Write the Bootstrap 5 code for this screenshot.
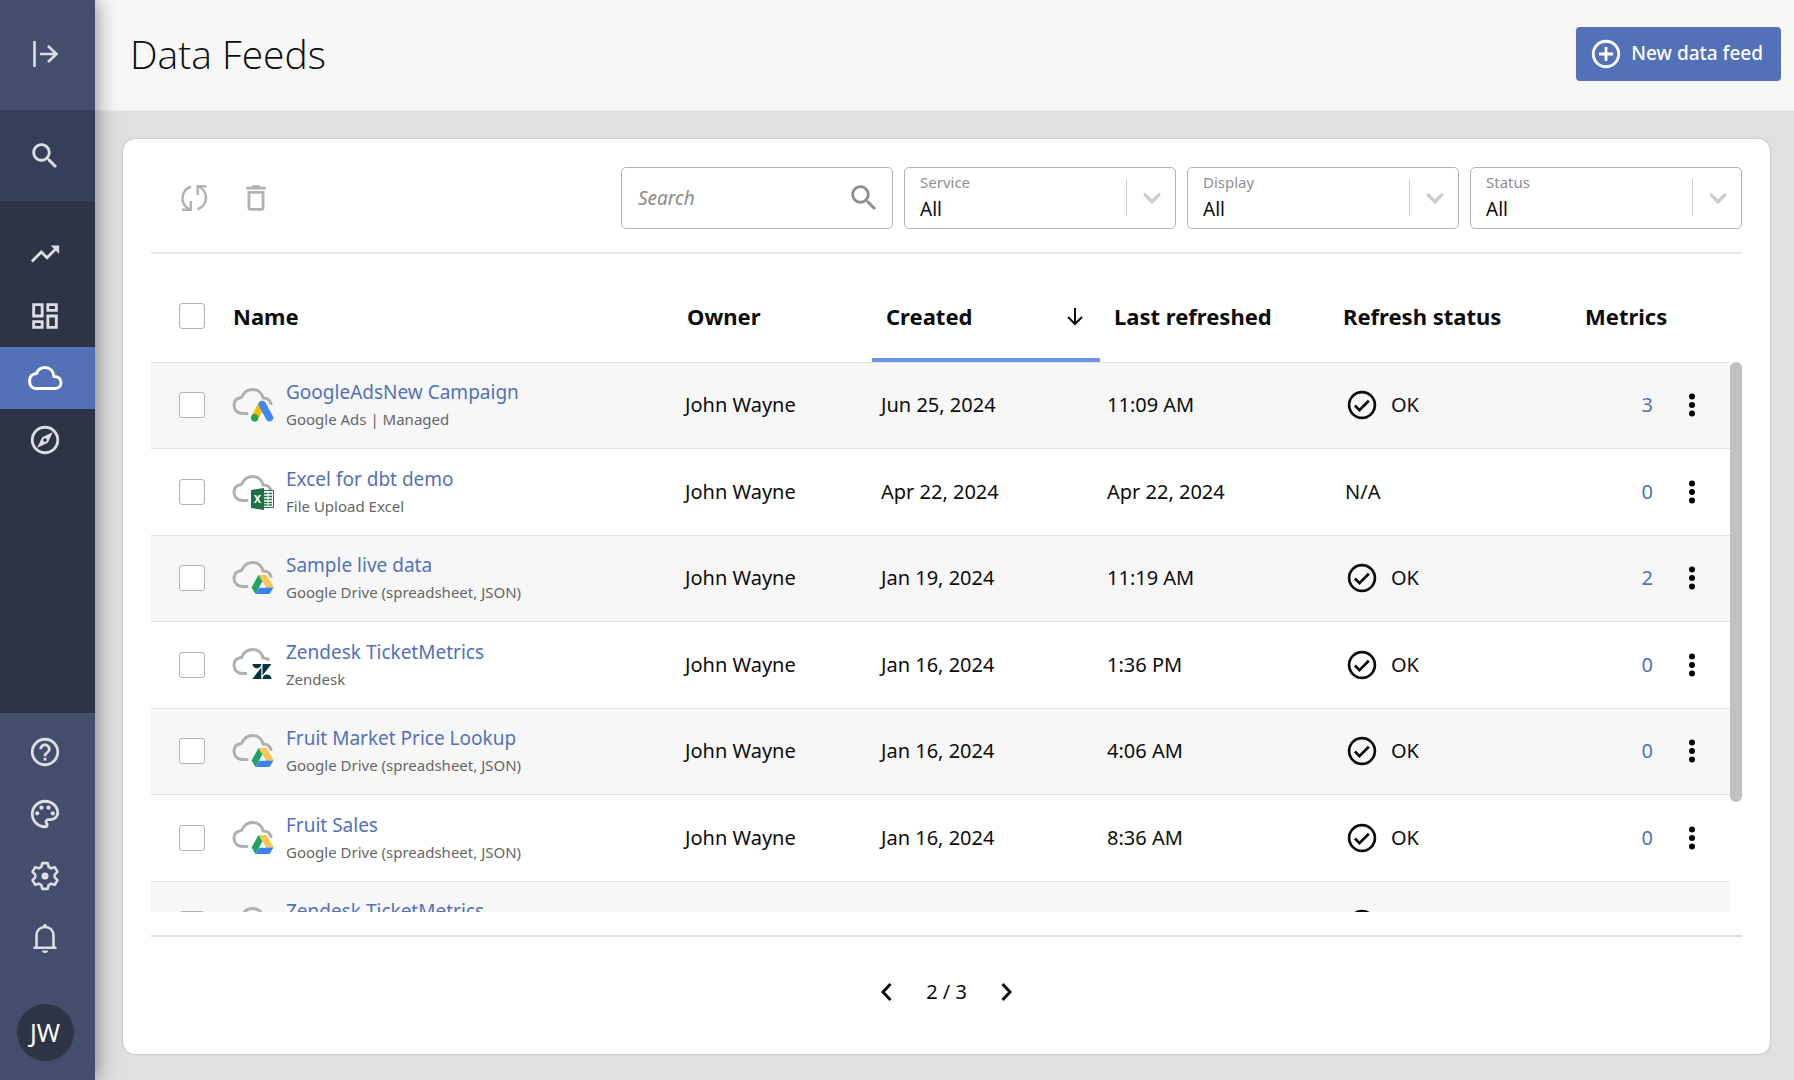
<!DOCTYPE html>
<html lang="en">
<head>
<meta charset="utf-8">
<meta name="viewport" content="width=device-width, initial-scale=1">
<title>Data Feeds</title>
<link href="https://cdn.jsdelivr.net/npm/bootstrap@5.3.0/dist/css/bootstrap.min.css" rel="stylesheet">
<style>
:root{--ink:#0c0c0c;--brand:#5271b9;--line:#e2e2e2;--stroke:#b3b3b3}
body{font-family:"Noto Sans","Open Sans",sans-serif;font-size:20px;line-height:28px;color:var(--ink);background:#e0e0e0}
a{color:var(--brand);text-decoration:none}
svg{display:block;flex:none}
.ic{width:34px;height:34px;fill:currentColor}
.ln{fill:none;stroke:currentColor;stroke-width:2}
.side{width:95px;background:#424e6b;box-shadow:0 0 20px rgba(0,0,0,.5);z-index:2;color:#dcdee3}
.side a,.side button{display:flex;align-items:center;justify-content:center;width:100%;height:62px;padding:0 5px 0 0;border:0;background:none;color:inherit}
.side .side-top{height:110px;padding-bottom:2px}
.side .side-find{height:91px;background:#363f58}
.side-main{background:#2c3446;padding-top:22px}
.side a.on{background:var(--brand);color:#fff}
.side-foot{padding:8px 0 19px}
.side .who{height:57px;margin-top:35px}
.avatar{width:57px;height:57px;border-radius:50%;background:#2c3446;color:#fff;font-size:25px;line-height:57px;text-align:center}
.head{height:111px;padding:0 13px 3px 35px;background:#f7f7f7;border-bottom:1px solid #ebebeb}
.head h1{font-family:"Open Sans","Noto Sans",sans-serif;font-size:39px;font-weight:300;line-height:54px}
.btn-new{height:54px;padding:0 18px 0 13px;gap:8px;border-radius:4px;background:var(--brand);color:#fff;font-size:19px;font-weight:500}
.btn-new:hover{background:#4763a6;color:#fff}
.panel{min-height:0;margin:28px 24px 26px 28px;padding:0 28px;border-radius:12px;background:#fff;box-shadow:0 0 2px rgba(0,0,0,.3)}
.tools{height:115px;padding:5px 0 0 26px;border-bottom:2px solid #e6e6e6}
.tool{display:block;padding:0;border:0;background:none;color:var(--stroke)}
.tool-pair{gap:28px}
.filters{gap:11px}
.field{width:272px;height:62px}
.field .form-control,.field .form-select{height:100%;border:1px solid var(--stroke);border-radius:5px;font-size:19px;color:var(--ink);background-color:#fff}
.field .form-control{padding:0 60px 0 16px;font-style:italic}
.field .form-control::placeholder{color:#8a8a8a;opacity:1}
.field .form-select{padding:22px 60px 0 15px;line-height:28px;background-image:none}
.field-name{position:absolute;left:16px;top:5px;font-size:15px;line-height:20px;color:#8f8f8f;pointer-events:none}
.field-mark{position:absolute;right:0;top:12px;width:50px;height:37px;border-left:1px solid #ccc;color:#ccc;pointer-events:none}
.field-find{position:absolute;right:12px;top:14px;color:#8f8f8f;pointer-events:none}
.grid-area{min-height:0}
.grid-clip{overflow:hidden;min-width:0}
.feeds{table-layout:fixed;margin:0;color:var(--ink);--bs-table-bg:transparent}
.feeds>:not(caption)>*>*{padding:0;border:0;vertical-align:middle;white-space:nowrap;background:none;color:inherit;box-shadow:none}
.feeds thead th{height:108px;padding:17px 14px 0 14px;font-size:22px;font-weight:700}
.feeds thead th.sorted{box-shadow:inset 0 -4px #7094e8}
.feeds tbody tr{height:86px;background:#fff;border-top:1px solid var(--line)}
.feeds tbody tr:nth-child(odd){background:#f7f7f7}
.feeds tbody tr:nth-child(even){height:87px}
.feeds tbody td:nth-child(1),.feeds thead th:nth-child(1){padding-left:28px}
.feeds tbody td:nth-child(2){padding-left:13px}
.feeds tbody td:nth-child(3){padding-left:12px}
.feeds tbody td:nth-child(4){padding-left:9px}
.feeds tbody td:nth-child(5){padding-left:7px}
.feeds tbody td:nth-child(6){padding-left:16px}
.feeds tbody td:nth-child(7){padding-right:16px;text-align:right}
.feeds tbody td:nth-child(8){padding-left:6px}
.c-check{width:68px}.c-owner{width:199px}.c-date{width:228px}.c-last{width:229px}.c-state{width:242px}.c-num{width:98px}.c-more{width:61px}
.pick.form-check-input{display:block;width:26px;height:26px;margin:0;border:1px solid var(--stroke);border-radius:3px;background-color:#fff}
.src{width:42px;height:36px;margin-right:12px}
.feed{display:block;font-size:19px;line-height:28px}
.kind{display:block;font-size:15px;line-height:26px;color:#666}
.rail{width:12px;padding-top:108px}
.thumb{height:80%;border-radius:6px;background:#c1c1c1}
.foot{height:119px;margin-top:23px;padding-bottom:7px;border-top:2px solid var(--line);gap:27px}
.foot button{padding:0;border:0;background:none;color:var(--ink)}
</style>
</head>
<body>
<svg width="0" height="0" class="position-absolute" aria-hidden="true">
  <defs>
    <symbol id="search" viewBox="0 0 24 24"><path d="M15.500 14h-.79l-.28-.27A6.500 6.500 0 1 0 13.730 14.430l.27.28v.79l5 4.990L20.490 19zM9.500 14a4.500 4.500 0 1 1 0-9 4.500 4.500 0 0 1 0 9z"/></symbol>
    <symbol id="cloud" viewBox="0 0 42 36"><path d="M15 26.500H11C5 26.500 2 22.500 2 18C2 13.500 5 11 9.500 10.500C11.500 6 15.500 2.500 20.500 2.500C26 2.500 30 6 31 11C35.500 11 38 13 39 16.500" fill="none" stroke="#b0b0b0" stroke-width="3" stroke-linecap="round" stroke-linejoin="round"/></symbol>
    <symbol id="drive" viewBox="0 0 42 36"><use href="#cloud"/><path d="M26.500 15h8L42 27.500h-8z" fill="#fbc651"/><path d="M26.500 15l4 6.500L23.500 34l-4-6.500z" fill="#1fa463"/><path d="M27.300 27.500H41.500L37.500 34H23.500z" fill="#3f80f0"/><path d="M30.500 21.500l3.300 6h-6.500z" fill="#fff"/></symbol>
    <symbol id="zendesk" viewBox="0 0 42 36"><path d="M15 26.500H11C5 26.500 2 22.500 2 18C2 13.500 5 11 9.500 10.500C11.500 6 15.500 2.500 20.500 2.500C26 2.500 30 6 31 11C34 11 36 12 37.500 13" fill="none" stroke="#b0b0b0" stroke-width="3"/><path d="M20.500 17h8.800a4.400 4.400 0 0 1-8.800 0zM29.300 20.500V32h-9zM30.500 17h9l-9 11.500zM30.500 32a4.500 4.500 0 0 1 9 0z" fill="#03363d"/></symbol>
    <symbol id="done" viewBox="0 0 24 24"><circle cx="12" cy="12" r="9.100" fill="none" stroke="currentColor" stroke-width="1.900"/><path d="M7 12.400l3.200 3.200L16.800 9" fill="none" stroke="currentColor" stroke-width="1.900"/></symbol>
    <symbol id="more" viewBox="0 0 34 34"><circle cx="17" cy="8.500" r="3"/><circle cx="17" cy="17" r="3"/><circle cx="17" cy="25.500" r="3"/></symbol>
    <symbol id="down" viewBox="0 0 16 16"><path d="M2.500 5.500L8 11l5.500-5.500" fill="none" stroke="currentColor" stroke-width="2.800" stroke-linecap="round"/></symbol>
  </defs>
</svg>
<div class="d-flex vh-100">
  <nav class="side d-flex flex-column flex-shrink-0" aria-label="Main">
    <button type="button" class="side-top" aria-label="Expand menu"><svg class="ic ln" viewBox="0 0 34 34"><path d="M6.500 4v26M12 17h16M20 9l8.500 8L20 25" stroke-width="2.600"/></svg></button>
    <button type="button" class="side-find" aria-label="Search"><svg class="ic"><use href="#search"/></svg></button>
    <div class="side-main flex-grow-1">
      <a href="#" aria-label="Metrics"><svg class="ic" viewBox="0 0 24 24"><path d="M16 6l2.290 2.290-4.880 4.880-4-4L2 16.590 3.410 18l6-6 4 4 6.300-6.290L22 12V6z"/></svg></a>
      <a href="#" aria-label="Dashboards"><svg class="ic" viewBox="0 0 24 24"><path d="M19 5v2h-4V5h4M9 5v6H5V5h4m10 8v6h-4v-6h4M9 17v2H5v-2h4M21 3h-8v6h8V3zM11 3H3v10h8V3zm10 8h-8v10h8V11zm-10 4H3v6h8v-6z"/></svg></a>
      <a href="#" class="on" aria-label="Data feeds" aria-current="page"><svg width="36" height="34" viewBox="0 0 36 34"><path d="M9.500 27.500H27.500C31.500 27.500 34 25 34 21.500C34 18 31.500 15.500 27 15.500C26.500 10 23 6.500 18 6.500C14 6.500 11 8.500 9.500 12.500C5 13 2.500 16 2.500 20C2.500 24.500 5.500 27.500 9.500 27.500z" fill="none" stroke="currentColor" stroke-width="3" stroke-linejoin="round"/></svg></a>
      <a href="#" aria-label="Explore"><svg class="ic" viewBox="0 0 24 24"><path fill-rule="evenodd" d="M12 2a10 10 0 1 0 0 20 10 10 0 0 0 0-20zm0 18a8 8 0 1 1 0-16 8 8 0 0 1 0 16zM6.500 17.500l7.510-3.490L17.500 6.500 9.990 9.990 6.500 17.500zM12 10.700a1.300 1.300 0 1 1 0 2.600 1.300 1.300 0 0 1 0-2.600z"/></svg></a>
    </div>
    <div class="side-foot">
      <a href="#" aria-label="Help"><svg class="ic" viewBox="0 0 24 24"><path d="M11 18h2v-2h-2v2zm1-16a10 10 0 1 0 0 20 10 10 0 0 0 0-20zm0 18a8 8 0 1 1 0-16 8 8 0 0 1 0 16zm0-14c-2.210 0-4 1.790-4 4h2c0-1.100.9-2 2-2s2 .9 2 2c0 2-3 1.750-3 5h2c0-2.250 3-2.500 3-5 0-2.210-1.790-4-4-4z"/></svg></a>
      <a href="#" aria-label="Themes"><svg class="ic" viewBox="0 0 24 24"><path d="M12 22C6.490 22 2 17.510 2 12S6.490 2 12 2s10 4.040 10 9c0 3.310-2.690 6-6 6h-1.770c-.28 0-.5.22-.5.5 0 .12.050.230.130.330.410.470.640 1.060.640 1.670A2.500 2.500 0 0 1 12 22zm0-18c-4.410 0-8 3.590-8 8s3.590 8 8 8c.28 0 .5-.22.5-.5 0-.16-.080-.280-.140-.350-.410-.460-.630-1.050-.630-1.650 0-1.380 1.120-2.500 2.500-2.500H16c2.210 0 4-1.790 4-4 0-3.860-3.590-7-8-7z"/><circle cx="6.500" cy="11.500" r="1.500"/><circle cx="9.500" cy="7.500" r="1.500"/><circle cx="14.500" cy="7.500" r="1.500"/><circle cx="17.500" cy="11.500" r="1.500"/></svg></a>
      <a href="#" aria-label="Settings"><svg class="ic" viewBox="-12 -12 24 24"><path d="M-2.600-6.400L-1.900-9.100H1.900L2.600-6.400L4.240-5.450L6.930-6.200L8.830-2.900L6.840-.95V.95L8.830 2.900L6.930 6.200L4.240 5.450L2.600 6.400L1.900 9.100H-1.900L-2.600 6.400L-4.240 5.450L-6.930 6.200L-8.830 2.900L-6.840 .95V-.95L-8.830-2.900L-6.930-6.200L-4.240-5.450z" fill="none" stroke="currentColor" stroke-width="1.800" stroke-linejoin="round"/><circle r="2.500"/></svg></a>
      <a href="#" aria-label="Notifications"><svg class="ic" viewBox="0 0 34 34"><path d="M8.500 27V15C8.500 9.500 12 6 17 6S25.500 9.500 25.500 15V27" fill="none" stroke="currentColor" stroke-width="2.600"/><path d="M5.500 25.500h23v2.400h-23zM15 5.500V5a2 2 0 0 1 4 0v.5zM14 29.500h6a3 2.500 0 0 1-6 0z"/></svg></a>
      <a href="#" class="who" aria-label="Account"><span class="avatar">JW</span></a>
    </div>
  </nav>
  <main class="d-flex flex-column flex-grow-1 overflow-hidden">
    <header class="head d-flex align-items-center justify-content-between flex-shrink-0">
      <h1 class="m-0">Data Feeds</h1>
      <button type="button" class="btn btn-new border-0 d-flex align-items-center"><svg class="ic" viewBox="0 0 24 24"><path d="M13 7h-2v4H7v2h4v4h2v-4h4v-2h-4V7zm-1-5a10 10 0 1 0 0 20 10 10 0 0 0 0-20zm0 18a8 8 0 1 1 0-16 8 8 0 0 1 0 16z"/></svg>New data feed</button>
    </header>
    <section class="panel d-flex flex-column flex-grow-1">
      <div class="tools d-flex align-items-center flex-shrink-0">
        <div class="tool-pair d-flex">
          <button type="button" class="tool" aria-label="Refresh"><svg class="ic ln" viewBox="0 0 34 34"><path d="M14 5.500C8 8 5.500 12 5.500 17.500C5.500 22.500 8.500 26.500 13.500 29M5 28.800H13.800V20M20.500 28.500C26.500 26 29 22 29 16.500C29 11.500 26 7.500 21 5M29.500 5.200H20.700V14" stroke-width="2.500"/></svg></button>
          <button type="button" class="tool" aria-label="Delete"><svg class="ic" viewBox="0 0 24 24"><path d="M16 9v10H8V9h8m-1.500-6h-5l-1 1H5v2h14V4h-3.500l-1-1zM18 7H6v12c0 1.100.9 2 2 2h8c1.100 0 2-.9 2-2V7z"/></svg></button>
        </div>
        <div class="filters d-flex ms-auto">
          <div class="field position-relative"><input type="search" class="form-control" placeholder="Search" aria-label="Search feeds"><svg class="ic field-find"><use href="#search"/></svg></div>
          <div class="field position-relative"><select id="f-service" class="form-select"><option>All</option></select><label for="f-service" class="field-name">Service</label><span class="field-mark d-flex align-items-center justify-content-center"><svg width="20" height="20"><use href="#down"/></svg></span></div>
          <div class="field position-relative"><select id="f-display" class="form-select"><option>All</option></select><label for="f-display" class="field-name">Display</label><span class="field-mark d-flex align-items-center justify-content-center"><svg width="20" height="20"><use href="#down"/></svg></span></div>
          <div class="field position-relative"><select id="f-status" class="form-select"><option>All</option></select><label for="f-status" class="field-name">Status</label><span class="field-mark d-flex align-items-center justify-content-center"><svg width="20" height="20"><use href="#down"/></svg></span></div>
        </div>
      </div>
      <div class="grid-area d-flex flex-grow-1">
        <div class="grid-clip flex-grow-1">
          <table class="table feeds">
            <colgroup><col class="c-check"><col><col class="c-owner"><col class="c-date"><col class="c-last"><col class="c-state"><col class="c-num"><col class="c-more"></colgroup>
            <thead><tr>
              <th><input type="checkbox" class="form-check-input pick" aria-label="Select all"></th>
              <th>Name</th><th>Owner</th>
              <th class="sorted" aria-sort="descending"><span class="d-flex align-items-center justify-content-between">Created<svg width="22" height="22" viewBox="0 0 22 22"><path d="M11 3v16M4 12l7 7 7-7" fill="none" stroke="currentColor" stroke-width="2"/></svg></span></th>
              <th>Last refreshed</th><th>Refresh status</th><th>Metrics</th><th></th>
            </tr></thead>
            <tbody>
              <tr>
                <td><input type="checkbox" class="form-check-input pick" aria-label="Select GoogleAdsNew Campaign"></td>
                <td><div class="d-flex align-items-center"><svg class="src" viewBox="0 0 42 36"><use href="#cloud"/><g stroke-width="7.400" stroke-linecap="round"><path d="M22.700 30.700L30 17.500" stroke="#fbbc04"/><path d="M30.300 17.500L37.500 30.700" stroke="#4285f4"/></g><circle cx="22.700" cy="30.700" r="3.700" fill="#23a35a"/></svg><div><a href="#" class="feed">GoogleAdsNew Campaign</a><span class="kind">Google Ads | Managed</span></div></div></td>
                <td>John Wayne</td><td>Jun 25, 2024</td><td>11:09 AM</td>
                <td><div class="d-flex align-items-center gap-2"><svg class="ic"><use href="#done"/></svg><span class="ps-1">OK</span></div></td>
                <td><a href="#">3</a></td><td><button type="button" class="tool text-black" aria-label="More"><svg class="ic"><use href="#more"/></svg></button></td>
              </tr>
              <tr>
                <td><input type="checkbox" class="form-check-input pick" aria-label="Select Excel for dbt demo"></td>
                <td><div class="d-flex align-items-center"><svg class="src" viewBox="0 0 42 36"><use href="#cloud"/><path d="M31 16.500h10.500v17H31z" fill="#fff" stroke="#217346"/><path d="M32 19.500h8M32 22.500h8M32 25.500h8M32 28.500h8M32 31h8" stroke="#217346" stroke-width="1.600"/><path d="M36 17v16" stroke="#fff"/><path d="M19 16l13-2v22l-13-2z" fill="#1e7145"/><text x="25.500" y="29" text-anchor="middle" font-size="11" font-weight="700" fill="#fff">X</text></svg><div><a href="#" class="feed">Excel for dbt demo</a><span class="kind">File Upload Excel</span></div></div></td>
                <td>John Wayne</td><td>Apr 22, 2024</td><td>Apr 22, 2024</td>
                <td>N/A</td>
                <td><a href="#">0</a></td><td><button type="button" class="tool text-black" aria-label="More"><svg class="ic"><use href="#more"/></svg></button></td>
              </tr>
              <tr>
                <td><input type="checkbox" class="form-check-input pick" aria-label="Select Sample live data"></td>
                <td><div class="d-flex align-items-center"><svg class="src"><use href="#drive"/></svg><div><a href="#" class="feed">Sample live data</a><span class="kind">Google Drive (spreadsheet, JSON)</span></div></div></td>
                <td>John Wayne</td><td>Jan 19, 2024</td><td>11:19 AM</td>
                <td><div class="d-flex align-items-center gap-2"><svg class="ic"><use href="#done"/></svg><span class="ps-1">OK</span></div></td>
                <td><a href="#">2</a></td><td><button type="button" class="tool text-black" aria-label="More"><svg class="ic"><use href="#more"/></svg></button></td>
              </tr>
              <tr>
                <td><input type="checkbox" class="form-check-input pick" aria-label="Select Zendesk TicketMetrics"></td>
                <td><div class="d-flex align-items-center"><svg class="src"><use href="#zendesk"/></svg><div><a href="#" class="feed">Zendesk TicketMetrics</a><span class="kind">Zendesk</span></div></div></td>
                <td>John Wayne</td><td>Jan 16, 2024</td><td>1:36 PM</td>
                <td><div class="d-flex align-items-center gap-2"><svg class="ic"><use href="#done"/></svg><span class="ps-1">OK</span></div></td>
                <td><a href="#">0</a></td><td><button type="button" class="tool text-black" aria-label="More"><svg class="ic"><use href="#more"/></svg></button></td>
              </tr>
              <tr>
                <td><input type="checkbox" class="form-check-input pick" aria-label="Select Fruit Market Price Lookup"></td>
                <td><div class="d-flex align-items-center"><svg class="src"><use href="#drive"/></svg><div><a href="#" class="feed">Fruit Market Price Lookup</a><span class="kind">Google Drive (spreadsheet, JSON)</span></div></div></td>
                <td>John Wayne</td><td>Jan 16, 2024</td><td>4:06 AM</td>
                <td><div class="d-flex align-items-center gap-2"><svg class="ic"><use href="#done"/></svg><span class="ps-1">OK</span></div></td>
                <td><a href="#">0</a></td><td><button type="button" class="tool text-black" aria-label="More"><svg class="ic"><use href="#more"/></svg></button></td>
              </tr>
              <tr>
                <td><input type="checkbox" class="form-check-input pick" aria-label="Select Fruit Sales"></td>
                <td><div class="d-flex align-items-center"><svg class="src"><use href="#drive"/></svg><div><a href="#" class="feed">Fruit Sales</a><span class="kind">Google Drive (spreadsheet, JSON)</span></div></div></td>
                <td>John Wayne</td><td>Jan 16, 2024</td><td>8:36 AM</td>
                <td><div class="d-flex align-items-center gap-2"><svg class="ic"><use href="#done"/></svg><span class="ps-1">OK</span></div></td>
                <td><a href="#">0</a></td><td><button type="button" class="tool text-black" aria-label="More"><svg class="ic"><use href="#more"/></svg></button></td>
              </tr>
              <tr>
                <td><input type="checkbox" class="form-check-input pick" aria-label="Select Zendesk TicketMetrics"></td>
                <td><div class="d-flex align-items-center"><svg class="src"><use href="#zendesk"/></svg><div><a href="#" class="feed">Zendesk TicketMetrics</a><span class="kind">Zendesk</span></div></div></td>
                <td></td><td></td><td></td>
                <td><div class="d-flex align-items-center gap-2"><svg class="ic"><use href="#done"/></svg></div></td>
                <td></td><td><button type="button" class="tool text-black" aria-label="More"><svg class="ic"><use href="#more"/></svg></button></td>
              </tr>
            </tbody>
          </table>
        </div>
        <div class="rail flex-shrink-0 d-flex flex-column"><div class="flex-grow-1"><div class="thumb"></div></div></div>
      </div>
      <div class="foot d-flex align-items-center justify-content-center flex-shrink-0">
        <button type="button" aria-label="Previous page"><svg width="24" height="24" viewBox="0 0 24 24"><path d="M15.500 4L8 12l7.500 8" fill="none" stroke="currentColor" stroke-width="3"/></svg></button>
        <span>2 / 3</span>
        <button type="button" aria-label="Next page"><svg width="24" height="24" viewBox="0 0 24 24"><path d="M8.500 4L16 12l-7.500 8" fill="none" stroke="currentColor" stroke-width="3"/></svg></button>
      </div>
    </section>
  </main>
</div>
<script src="https://cdn.jsdelivr.net/npm/bootstrap@5.3.0/dist/js/bootstrap.bundle.min.js"></script>
</body>
</html>
